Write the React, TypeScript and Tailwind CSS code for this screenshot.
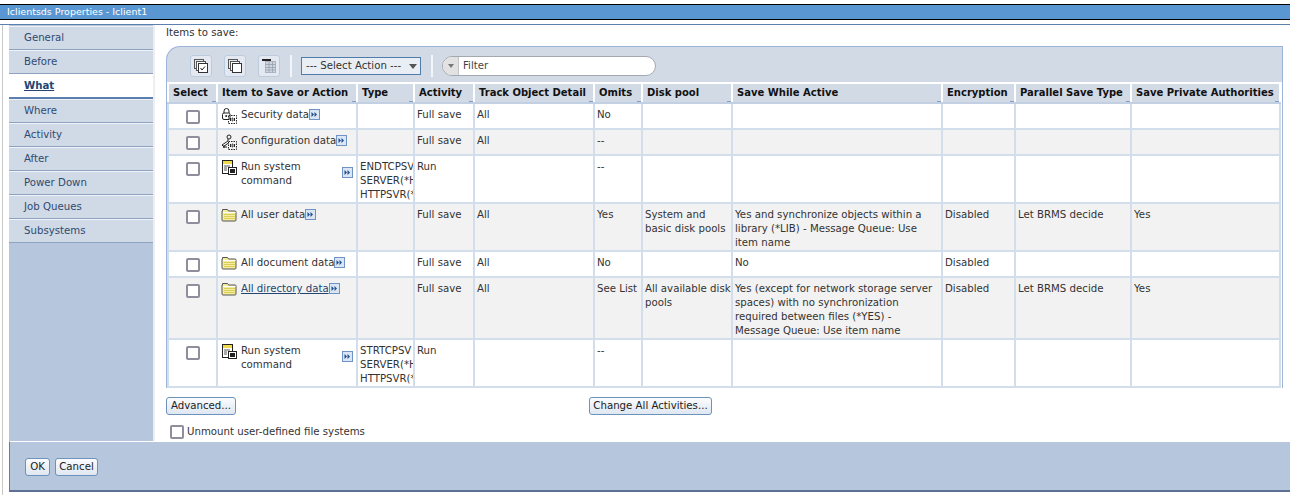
import React from "react";

const font = "font-['DejaVu_Sans',Verdana,sans-serif]";

const tabs = ["General", "Before", "What", "Where", "Activity", "After", "Power Down", "Job Queues", "Subsystems"];

const columns = [
  { name: "Select", width: "w-[49px]" },
  { name: "Item to Save or Action", width: "w-[140px]" },
  { name: "Type", width: "w-[57px]" },
  { name: "Activity", width: "w-[60px]" },
  { name: "Track Object Detail", width: "w-[120px]" },
  { name: "Omits", width: "w-[48px]" },
  { name: "Disk pool", width: "w-[90px]" },
  { name: "Save While Active", width: "w-[210px]" },
  { name: "Encryption", width: "w-[73px]" },
  { name: "Parallel Save Type", width: "w-[116px]" },
  { name: "Save Private Authorities", width: "w-[149px]" },
];

type IconKind = "lock" | "config" | "command" | "folder";

type Row = {
  icon: IconKind;
  item: string;
  link?: boolean;
  wide?: boolean;
  height: string;
  type?: string[];
  activity: string;
  track?: string;
  omits: string;
  pool?: string;
  active?: string;
  encryption?: string;
  parallel?: string;
  authorities?: string;
};

const rows: Row[] = [
  { icon: "lock", item: "Security data", height: "h-[26px]", activity: "Full save", track: "All", omits: "No" },
  { icon: "config", item: "Configuration data", height: "h-[26px]", activity: "Full save", track: "All", omits: "--" },
  {
    icon: "command",
    item: "Run system command",
    wide: true,
    height: "h-[48px]",
    type: ["ENDTCPSV", "SERVER(*H", "HTTPSVR(*"],
    activity: "Run",
    omits: "--",
  },
  {
    icon: "folder",
    item: "All user data",
    height: "h-[48px]",
    activity: "Full save",
    track: "All",
    omits: "Yes",
    pool: "System and\nbasic disk pools",
    active: "Yes and synchronize objects within a library (*LIB) - Message Queue: Use item name",
    encryption: "Disabled",
    parallel: "Let BRMS decide",
    authorities: "Yes",
  },
  {
    icon: "folder",
    item: "All document data",
    height: "h-[26px]",
    activity: "Full save",
    track: "All",
    omits: "No",
    active: "No",
    encryption: "Disabled",
  },
  {
    icon: "folder",
    item: "All directory data",
    link: true,
    height: "h-[62px]",
    activity: "Full save",
    track: "All",
    omits: "See List",
    pool: "All available disk\npools",
    active:
      "Yes (except for network storage server spaces) with no synchronization required between files (*YES) - Message Queue: Use item name",
    encryption: "Disabled",
    parallel: "Let BRMS decide",
    authorities: "Yes",
  },
  {
    icon: "command",
    item: "Run system command",
    wide: true,
    height: "h-[48px]",
    type: ["STRTCPSV", "SERVER(*H", "HTTPSVR(*"],
    activity: "Run",
    omits: "--",
  },
];

function ItemIcon({ kind }: { kind: IconKind }) {
  if (kind === "folder") {
    return (
      <svg width="16" height="14" viewBox="0 0 16 14" className="shrink-0">
        <path d="M1.500 3V1.500h5l1 1.500h6.500a1 1 0 0 1 1 1V12a1 1 0 0 1-1 1H2a1 1 0 0 1-1-1V3z" fill="#f4eda0" stroke="#555" />
        <path d="M2 4.500h12.500" stroke="#fff" />
        <path d="M3 6.500h11M3 8.500h11M3 10.500h11" stroke="#dccf58" />
      </svg>
    );
  }
  if (kind === "command") {
    return (
      <svg width="16" height="16" viewBox="0 0 16 16" className="shrink-0">
        <rect x="1.500" y="0.500" width="10" height="13" fill="#fff" stroke="#222" />
        <rect x="2" y="1" width="9" height="3" fill="#f1d94a" />
        <path d="M3 6h6M3 8h3M3 10h3" stroke="#555" />
        <rect x="7.500" y="7.500" width="8" height="7" fill="#fff" stroke="#222" />
        <rect x="9" y="9" width="5" height="4" fill="#222" />
      </svg>
    );
  }
  const small = (
    <g>
      <rect x="7.500" y="7.500" width="8" height="8" fill="none" stroke="#222" strokeDasharray="1.500 1" />
      <path d="M9.500 10v3M13.500 10v3" stroke="#222" />
      <path d="M11 10v3h1v-3z" fill="none" stroke="#222" strokeWidth="0.700" />
    </g>
  );
  if (kind === "lock") {
    return (
      <svg width="16" height="16" viewBox="0 0 16 16" className="shrink-0">
        <path d="M3 5V3a2.500 2.500 0 0 1 5 0v2" fill="none" stroke="#222" />
        <rect x="1.500" y="5" width="7.500" height="6.500" rx="1.500" fill="#fff" stroke="#222" />
        <circle cx="5.200" cy="8" r="1" fill="#222" />
        {small}
      </svg>
    );
  }
  return (
    <svg width="16" height="16" viewBox="0 0 16 16" className="shrink-0">
      <circle cx="8" cy="3" r="2" fill="none" stroke="#222" />
      <path d="M7 5v2L1 11l1.500 1.500L7.500 9" fill="#fff" stroke="#222" />
      <path d="M2 13h4M3 11v3" stroke="#222" />
      {small}
    </svg>
  );
}

function ArrowBox() {
  return (
    <svg width="11" height="11" viewBox="0 0 11 11" className="shrink-0 block">
      <rect x="0.500" y="0.500" width="10" height="10" fill="#dbe6f4" stroke="#6f93c4" />
      <path d="M2.500 3l2.500 2.500L2.500 8zM5.500 3L8 5.500 5.500 8z" fill="#1f4f8f" />
    </svg>
  );
}

function Checkbox({ className = "" }: { className?: string }) {
  return <span className={`block w-[14px] h-[14px] rounded-[2px] border-2 border-[#8e8e9c] bg-white ${className}`} />;
}

function ToolButton({ children }: { children: React.ReactNode }) {
  return (
    <button className="w-[22px] h-[22px] flex items-center justify-center rounded-[3px] border border-[#bccbdd] bg-[#e4e9f1]">
      {children}
    </button>
  );
}

function PushButton({ label, className = "" }: { label: string; className?: string }) {
  return (
    <button
      className={`h-[18px] flex items-center justify-center whitespace-nowrap rounded-[3px] border border-[#6d93bd] bg-gradient-to-b from-[#fbfcfe] to-[#dfe7f2] text-[#222] ${className}`}
    >
      {label}
    </button>
  );
}

function Cell({ children }: { children?: React.ReactNode }) {
  return (
    <td className="border-2 border-[#d3deec] align-top pl-[2px] pr-[2px] pt-[4px] pb-0 leading-[14px] overflow-hidden">
      {children}
    </td>
  );
}

export default function App() {
  return (
    <div className={`w-[1290px] h-[495px] overflow-hidden bg-white flex flex-col pt-[4px] text-[10.2px] text-[#333] ${font}`}>
      {/* title bar */}
      <div className="h-[16px] shrink-0 border-t border-b border-black bg-[#5a96d2] pl-[7px] text-[9.5px] leading-[14px] text-white">
        Iclientsds Properties - Iclient1
      </div>
      <div className="h-[4px] shrink-0 border-b border-[#5b80ad] box-content" />

      <div className="flex-1 min-h-0 flex pl-[2px]">
        <div className="w-[6px] shrink-0 border-l border-[#c9c9c9]" />
        <div className="flex-1 min-w-0 flex flex-col pl-px">
          <div className="flex-1 min-h-0 flex">
            {/* side tabs */}
            <nav className="w-[144px] shrink-0 bg-[#b5c6dd] flex flex-col pt-px">
              {tabs.map((tab) =>
                tab === "What" ? (
                  <div
                    key={tab}
                    className="h-[25px] -mr-[1px] shrink-0 bg-white border-b-2 border-[#5b80ad] pl-[15px] pt-[4px] font-bold text-[#23456f] underline"
                  >
                    {tab}
                  </div>
                ) : (
                  <div
                    key={tab}
                    className="h-[24px] shrink-0 bg-[#d0d9e6] border-t border-[#eef2f7] border-b border-b-[#8ea3bf] pl-[15px] pt-[3px] text-[#2f4a70]"
                  >
                    {tab}
                  </div>
                ),
              )}
            </nav>
            <div className="w-[2px] shrink-0 bg-[#eeeeee]" />

            {/* main content */}
            <main className="flex-1 min-w-0 pl-[11px] flex flex-col">
              <div className="h-[21px] shrink-0 pt-px leading-[14px]">Items to save:</div>
              <div className="w-[1117px] border-l border-r border-t border-[#9db5d8] rounded-tl-[14px] bg-[#d2dae6]">
                <div className="h-[35px] pt-[3px] flex items-center pl-[23px]">
                  <div className="flex gap-[12px]">
                    <ToolButton>
                      <svg width="16" height="16" viewBox="0 0 16 16">
                        <rect x="1.500" y="1.500" width="9" height="9" fill="none" stroke="#555" />
                        <rect x="3.500" y="3.500" width="9" height="9" fill="#fff" stroke="#555" />
                        <rect x="5.500" y="5.500" width="9" height="9" fill="#fff" stroke="#333" />
                        <path d="M7.500 10l1.500 2 3-3.500" fill="none" stroke="#222" />
                      </svg>
                    </ToolButton>
                    <ToolButton>
                      <svg width="16" height="16" viewBox="0 0 16 16">
                        <rect x="1.500" y="1.500" width="9" height="9" fill="none" stroke="#555" />
                        <rect x="3.500" y="3.500" width="9" height="9" fill="#fff" stroke="#555" />
                        <rect x="5.500" y="5.500" width="9" height="9" fill="#fff" stroke="#333" />
                      </svg>
                    </ToolButton>
                    <ToolButton>
                      <svg width="16" height="16" viewBox="0 0 16 16">
                        <path d="M1 2h9" stroke="#222" strokeWidth="2" />
                        <rect x="4.500" y="3.500" width="10" height="11" fill="#cfd6e0" stroke="#aab4c2" />
                        <path d="M4.500 6.500h10M4.500 9.500h10M4.500 12h10M8 3.500v11M11.500 3.500v11" stroke="#9fa9b8" />
                      </svg>
                    </ToolButton>
                  </div>
                  <div className="w-[2px] h-[22px] ml-[10px] bg-[#f2f5f9]" />
                  <div className="w-[120px] h-[18px] ml-[9px] flex items-center justify-between border border-[#4f7cab] bg-[#e9eef5] pl-[4px] pr-[3px] text-[#333]">
                    <span>--- Select Action ---</span>
                    <span className="w-0 h-0 border-l-[4px] border-r-[4px] border-t-[5px] border-l-transparent border-r-transparent border-t-[#555]" />
                  </div>
                  <div className="w-[2px] h-[22px] ml-[10px] bg-[#f2f5f9]" />
                  <div className="w-[214px] h-[20px] ml-[9px] flex items-center rounded-full border border-[#a4a9b0] bg-white overflow-hidden">
                    <span className="w-[16px] h-full flex items-center justify-center bg-[#e2e2e2] border-r border-[#c4c4c4]">
                      <span className="w-0 h-0 border-l-[3px] border-r-[3px] border-t-[4px] border-l-transparent border-r-transparent border-t-[#777]" />
                    </span>
                    <span className="pl-[4px] text-[#444]">Filter</span>
                  </div>
                </div>

                <div className="bg-white pb-0 pr-[3px]">
                  <table className="w-[1112px] table-fixed border-collapse bg-white">
                    <thead>
                      <tr className="h-[20px]">
                        {columns.map((col) => (
                          <th
                            key={col.name}
                            className={`${col.width} relative bg-[#d2dae6] border-l-2 border-t-2 border-r-2 border-white border-b-2 border-b-[#c3d0e4] p-0 pl-[4px] text-left font-bold text-[10px] leading-[14px] text-[#111] whitespace-nowrap overflow-hidden`}
                          >
                            {col.name}
                            <span className="absolute right-0 bottom-0 w-[4px] h-px bg-[#7f9fd0]" />
                          </th>
                        ))}
                      </tr>
                    </thead>
                    <tbody>
                      {rows.map((row, i) => (
                        <tr key={i} className={`${row.height} ${i % 2 === 1 ? "bg-[#f2f2f2]" : "bg-white"}`}>
                          <td className="border-2 border-[#d3deec] align-top p-0 pt-[6px]">
                            <Checkbox className="mx-auto" />
                          </td>
                          <Cell>
                            <div className="flex items-start pl-[1px]">
                              <span className="w-[20px] shrink-0">
                                <ItemIcon kind={row.icon} />
                              </span>
                              <span
                                className={`${row.wide ? "w-[101px]" : ""} ${row.link ? "text-[#23456f] underline" : ""} shrink-0`}
                              >
                                {row.item}
                              </span>
                              <span className={row.wide ? "pt-[7px]" : "pt-[1px]"}>
                                <ArrowBox />
                              </span>
                            </div>
                          </Cell>
                          <Cell>
                            {row.type?.map((line) => (
                              <div key={line} className="whitespace-nowrap">
                                {line}
                              </div>
                            ))}
                          </Cell>
                          <Cell>{row.activity}</Cell>
                          <Cell>{row.track}</Cell>
                          <Cell>{row.omits}</Cell>
                          <Cell>
                            <span className="whitespace-pre">{row.pool}</span>
                          </Cell>
                          <Cell>{row.active}</Cell>
                          <Cell>{row.encryption}</Cell>
                          <Cell>{row.parallel}</Cell>
                          <Cell>{row.authorities}</Cell>
                        </tr>
                      ))}
                    </tbody>
                  </table>
                </div>
              </div>

              <div className="w-[1117px] flex items-start mt-[9px]">
                <PushButton label="Advanced..." className="w-[70px]" />
                <PushButton label="Change All Activities..." className="w-[123px] ml-[353px]" />
              </div>
              <div className="flex items-center gap-[3px] mt-[9px] ml-[4px]">
                <Checkbox />
                <span>Unmount user-defined file systems</span>
              </div>
            </main>
          </div>

          {/* footer */}
          <footer className="h-[51px] shrink-0 mb-[3px] pt-px border-t border-t-white border-l border-l-[#5b80ad] border-b-2 border-b-[#5b7093] bg-[#b5c6dd] flex items-center gap-[5px] pl-[15px]">
            <PushButton label="OK" className="w-[25px]" />
            <PushButton label="Cancel" className="w-[43px]" />
          </footer>
        </div>
      </div>
    </div>
  );
}
